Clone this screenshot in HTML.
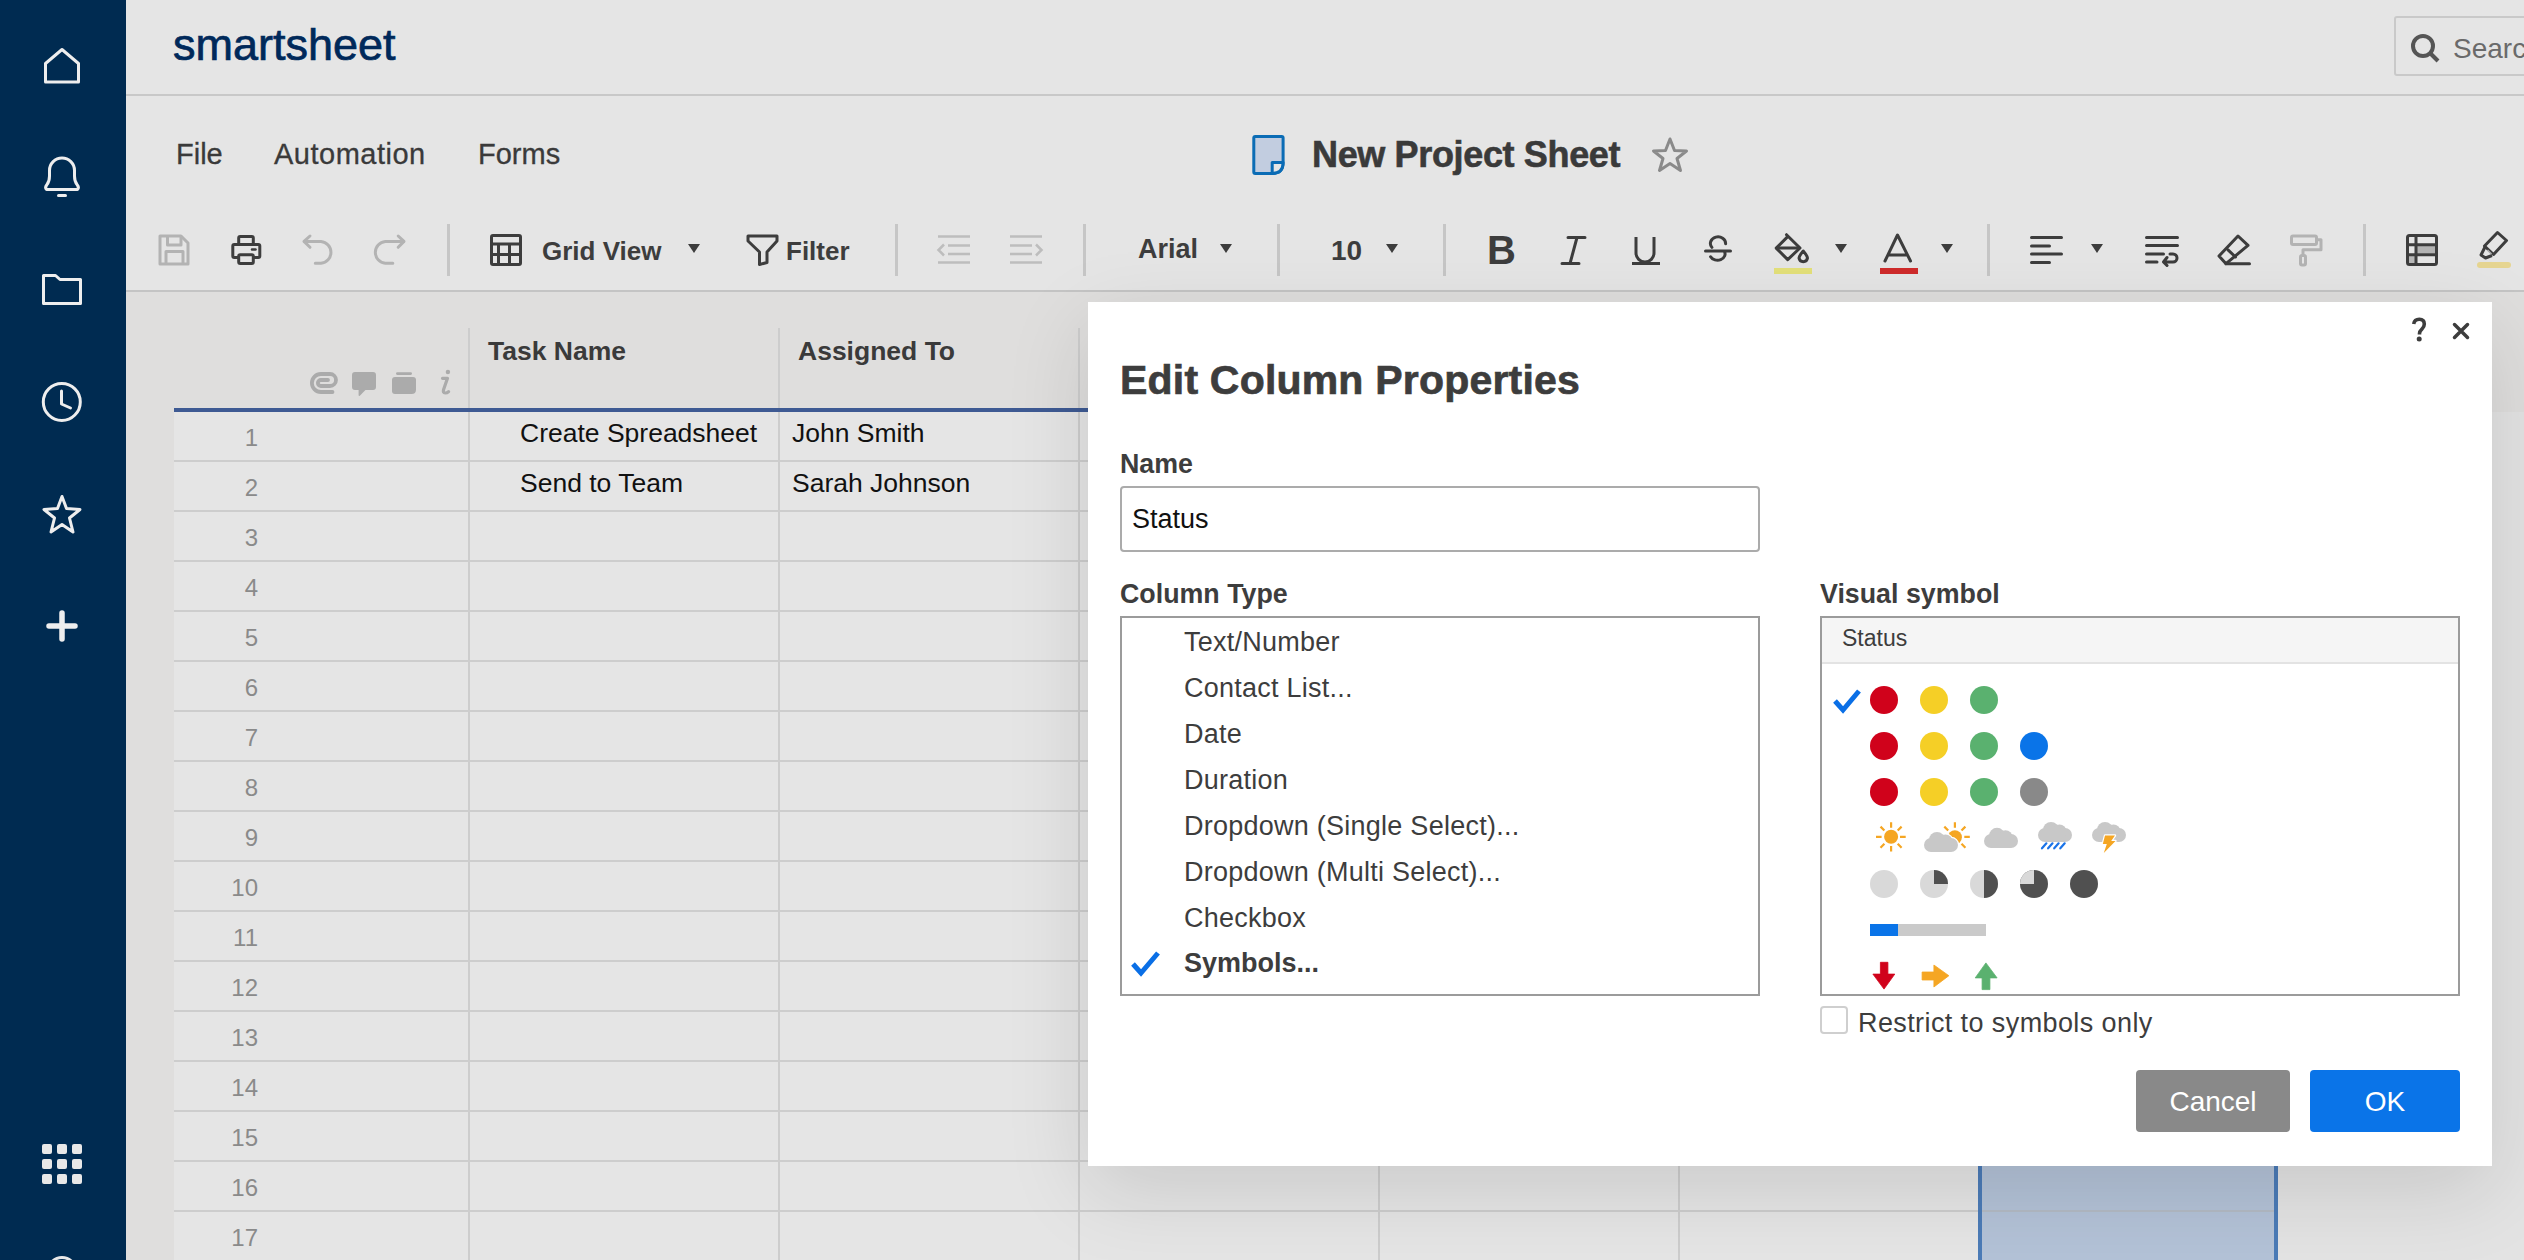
<!DOCTYPE html>
<html><head><meta charset="utf-8">
<style>
*{box-sizing:border-box;margin:0;padding:0}
html,body{width:2524px;height:1260px;overflow:hidden;background:#e5e5e5;font-family:"Liberation Sans",sans-serif;position:relative}
.a{position:absolute}
#side{left:0;top:0;width:126px;height:1260px;background:#002b51}
#hdr{left:126px;top:0;width:2398px;height:96px;background:#e5e5e5;border-bottom:2px solid #c8c8c8}
#menu{left:126px;top:96px;width:2398px;height:196px;background:#e5e5e5;border-bottom:2px solid #c4c4c4}
#gridbg{left:126px;top:292px;width:2398px;height:968px;background:#dfdedd}
.t{white-space:nowrap;line-height:1}
.vd{position:absolute;width:3px;height:52px;background:#c6c6c6;top:224px}
.rowline{position:absolute;left:174px;width:2104px;height:2px;background:#cdcdcd}
.coll{position:absolute;width:2px;background:#cdcdcd}
.rn{position:absolute;width:100px;text-align:right;font-size:24px;color:#8a8a8a;left:158px}
</style></head><body>
<div id="side" class="a"></div>
<div id="hdr" class="a"></div>
<div id="menu" class="a"></div>
<div id="gridbg" class="a"></div>
<!-- sidebar icons -->
<svg class="a" style="left:0;top:0" width="126" height="1260" fill="none" stroke="#eeeeee" stroke-width="3">
  <path d="M45.5 82 V63.5 L62 49.5 L78.5 63.5 V82 Z" stroke-linejoin="round"/>
  <path d="M46.5 189.5 Q44.5 187.5 47 184.5 Q49.5 181.5 49.5 176 V170.5 A12.5 12.5 0 0 1 74.5 170.5 V176 Q74.5 181.5 77 184.5 Q79.5 187.5 77.5 189.5 Z" stroke-linejoin="round"/>
  <path d="M58.5 195.5 H65.5" stroke-linecap="round"/>
  <path d="M43.5 303.5 V275.5 H55.5 L60 279.5 H80.5 V303.5 Z" stroke-linejoin="round"/>
  <circle cx="61.8" cy="401.9" r="18.5"/>
  <path d="M61.5 391 V404 L70.5 408" stroke-linecap="round" stroke-linejoin="round"/>
  <path d="M62 496.5 L66.5 508.5 L80 509.5 L69.5 518 L73 532 L62 524.5 L51 532 L54.5 518 L44 509.5 L57.5 508.5 Z" stroke-linejoin="round"/>
  <path d="M62 613 V639 M49 626 H75" stroke-width="5.5" stroke-linecap="round"/>
</svg>
<svg class="a" style="top:1142px;left:40px" width="44" height="44" fill="#e8e8e8">
  <rect x="2" y="2" width="10" height="10" rx="2"/><rect x="17" y="2" width="10" height="10" rx="2"/><rect x="32" y="2" width="10" height="10" rx="2"/>
  <rect x="2" y="17" width="10" height="10" rx="2"/><rect x="17" y="17" width="10" height="10" rx="2"/><rect x="32" y="17" width="10" height="10" rx="2"/>
  <rect x="2" y="32" width="10" height="10" rx="2"/><rect x="17" y="32" width="10" height="10" rx="2"/><rect x="32" y="32" width="10" height="10" rx="2"/>
</svg>
<svg class="a" style="left:0;top:1240px" width="126" height="20" fill="none" stroke="#e8e8e8" stroke-width="3"><circle cx="62" cy="31.5" r="14"/></svg>

<!-- header -->
<div class="a t" style="left:173px;top:21.6px;font-size:45px;color:#00295a;-webkit-text-stroke:0.7px #00295a">smartsheet</div>
<div class="a" style="left:2394px;top:16px;width:140px;height:60px;border:2px solid #c9c9c9;border-radius:3px;background:#e5e5e5"></div>
<svg class="a" style="left:2408px;top:30px" width="34" height="34" fill="none" stroke="#555" stroke-width="4"><circle cx="15" cy="16" r="10"/><path d="M22 23 L30 31" stroke-linecap="butt"/></svg>
<div class="a t" style="left:2453px;top:35px;font-size:28px;color:#6a6a6a">Searc</div>

<!-- menu -->
<div class="a t" style="left:176px;top:140px;font-size:29px;color:#3a3a3a;-webkit-text-stroke:0.3px #3a3a3a">File</div>
<div class="a t" style="left:274px;top:140px;font-size:29px;color:#3a3a3a;letter-spacing:0.5px;-webkit-text-stroke:0.3px #3a3a3a">Automation</div>
<div class="a t" style="left:478px;top:140px;font-size:29px;color:#3a3a3a;-webkit-text-stroke:0.3px #3a3a3a">Forms</div>
<svg class="a" style="left:1250px;top:132px" width="40" height="46" stroke="#0b6cb5" stroke-width="3" stroke-linejoin="round"><path d="M3.8 5.8 Q3.8 4.4 5.2 4.4 H31.7 Q33.1 4.4 33.1 5.8 V30.5 Q33.1 41.4 22.2 41.4 H5.2 Q3.8 41.4 3.8 40 Z" fill="#c2cde0"/><path d="M22.2 41.4 V30.5 H33.1 Q33.1 41.4 22.2 41.4 Z" fill="#e6e6e6"/></svg>
<div class="a t" style="left:1312px;top:137px;font-size:36px;font-weight:bold;color:#3a3a3a;letter-spacing:-0.35px;-webkit-text-stroke:0.6px #3a3a3a">New Project Sheet</div>
<svg class="a" style="left:1650px;top:136px" width="40" height="40" fill="none" stroke="#8a8a8a" stroke-width="3"><path d="M20 3 L24.5 14.5 L36.5 15 L27 22.5 L30.5 34.5 L20 27.5 L9.5 34.5 L13 22.5 L3.5 15 L15.5 14.5 Z" stroke-linejoin="round"/></svg>
<!-- toolbar -->
<svg class="a" style="left:126px;top:200px" width="2398" height="90" fill="none" stroke="#3d3d3d" stroke-width="3">
  <!-- save (disabled) -->
  <g stroke="#b3b3b3" stroke-linejoin="round"><path d="M34 36 H55 L62 43 V64 H34 Z"/><path d="M41.5 36 V45 H55 V36 M40 64 V51.5 H57 V64"/></g>
  <!-- print -->
  <g stroke-linejoin="round"><rect x="112.7" y="36.5" width="14.6" height="8" rx="1.5"/><rect x="106.8" y="44.5" width="27" height="13" rx="1.5"/><rect x="112.7" y="54.7" width="14.6" height="8.8" rx="1.5" fill="#e5e5e5"/><path d="M126 49.5 H129.5" stroke-width="2.5" stroke-linecap="round"/></g>
  <!-- undo -->
  <g stroke="#b3b3b3" stroke-linecap="round" stroke-linejoin="round"><path d="M184 36 L178 41.4 L184 47.3"/><path d="M178.5 41.4 H195 A11 11 0 0 1 195 63.3 H189.3"/></g>
  <!-- redo -->
  <g stroke="#b3b3b3" stroke-linecap="round" stroke-linejoin="round"><path d="M272.2 36 L278 41.4 L272.2 47.3"/><path d="M277.5 41.4 H259.3 A11 11 0 0 0 259.3 63.3 H266.8"/></g>
  <!-- grid icon -->
  <g stroke-linejoin="round"><rect x="365.5" y="35.5" width="29" height="29" rx="1.5"/><path d="M365 44 H395 M365 54.5 H395 M372.5 44 V65 M383.5 44 V65"/></g>
  <path d="M562 44 H574 L568 53 Z" fill="#3d3d3d" stroke="none"/>
  <!-- filter -->
  <path d="M622 36 H651 V41 L641 52 V62.5 L633.5 64.5 V52 L622 41 Z" stroke-linejoin="round"/>
  <!-- outdent -->
  <g stroke="#bdbdbd" stroke-width="2.5"><path d="M812 36.5 H844 M822 45.5 H844 M822 54 H844 M812 62.5 H844"/><path d="M818 44.5 L812.5 50 L818 55.5"/></g>
  <!-- indent -->
  <g stroke="#bdbdbd" stroke-width="2.5"><path d="M884 36.5 H916 M884 45.5 H906 M884 54 H906 M884 62.5 H916"/><path d="M910 44.5 L915.5 50 L910 55.5"/></g>
  <path d="M1094 44 H1106 L1100 53 Z" fill="#3d3d3d" stroke="none"/>
  <path d="M1260 44 H1272 L1266 53 Z" fill="#3d3d3d" stroke="none"/>
  <!-- I -->
  <path d="M1442 37.5 H1459 M1436 63.5 H1453 M1451 37.5 L1444 63.5" stroke-linecap="round"/>
  <!-- U -->
  <path d="M1510 37 V53 A9 9 0 0 0 1528 53 V37 M1506 63.5 H1534"/>
  <!-- S -->
  <path d="M1585.9 47.4 A7.6 6.6 0 1 1 1599.6 43.8 M1598.3 51.2 A7.6 6.3 0 1 1 1584.6 56.7 M1579.5 51 H1604.5" stroke-linecap="round"/>
  <!-- paint bucket -->
  <g stroke-linejoin="round" stroke-linecap="round"><path d="M1660.5 34.7 L1674 48 L1661.7 59.6 L1650.2 48.1 L1661.7 36.6"/><path d="M1651 48 H1673"/><path d="M1677.2 51 Q1681.5 56 1681.5 58 A4.3 4.3 0 0 1 1673 58 Q1673 56 1677.2 51 Z"/></g>
  <rect x="1648" y="68" width="38" height="6" fill="#e3e07a" stroke="none"/>
  <path d="M1709 44 H1721 L1715 53 Z" fill="#3d3d3d" stroke="none"/>
  <!-- A -->
  <path d="M1759 61 L1771.5 35 L1784.5 61 M1762 55 H1781" stroke-linejoin="round" stroke-linecap="round"/>
  <rect x="1754" y="68" width="38" height="6" fill="#cf2b2b" stroke="none"/>
  <path d="M1815 44 H1827 L1821 53 Z" fill="#3d3d3d" stroke="none"/>
  <!-- align left -->
  <g stroke-linecap="round"><path d="M1905.5 37.4 H1935.5 M1905.5 46 H1923.5 M1905.5 54 H1935.5 M1905.5 62.5 H1923.5"/></g>
  <path d="M1965 44 H1977 L1971 53 Z" fill="#3d3d3d" stroke="none"/>
  <!-- wrap -->
  <g stroke-linecap="round" stroke-linejoin="round"><path d="M2020.5 37.4 H2051.5 M2020.5 45.5 H2051.5 M2020.5 54 H2037.5 M2020.5 62 H2031"/><path d="M2044 54 H2047 A4 4 0 0 1 2047 62 H2038 M2041 57.5 L2037.5 62 L2041 65.5"/></g>
  <!-- eraser -->
  <g stroke-linejoin="round" stroke-linecap="round"><path d="M2112 36 L2122 45.4 L2100 63.7 L2093 56 Z"/><path d="M2102 49.8 L2109.5 57"/><path d="M2100 63.7 H2123.5"/></g>
  <!-- paint roller -->
  <g stroke="#b3b3b3" stroke-linejoin="round"><rect x="2165.5" y="36" width="25" height="8.5" rx="1.5"/><path d="M2190.5 39.7 H2195 V49.8 H2177 V55"/><rect x="2174.5" y="55.5" width="5" height="9.5" rx="1.5"/></g>
  <!-- table -->
  <g stroke-linejoin="round"><rect x="2290" y="45" width="20" height="8.5" fill="#b3b3b3" stroke="none"/><rect x="2281" y="55" width="8" height="9" fill="#b8b8b8" stroke="none"/><rect x="2281.5" y="35.5" width="29" height="29" rx="2"/><path d="M2281 44.7 H2311 M2281 54.8 H2311 M2290 35 V65"/></g>
  <!-- highlighter -->
  <g stroke-linejoin="round"><path d="M2371.5 32.5 L2380.5 40.5 L2367.5 54.5 L2358.5 46 Z"/><path d="M2359 47 L2355 55 L2359.5 58 L2366 55.5"/><path d="M2361.5 50 L2365.5 54" stroke="#b3b3b3" stroke-width="1.5"/></g>
  <rect x="2351" y="62" width="34" height="6" rx="3" fill="#e6d591" stroke="none"/>
</svg>
<div class="vd" style="left:447px"></div>
<div class="vd" style="left:895px"></div>
<div class="vd" style="left:1083px"></div>
<div class="vd" style="left:1277px"></div>
<div class="vd" style="left:1443px"></div>
<div class="vd" style="left:1987px"></div>
<div class="vd" style="left:2363px"></div>
<div class="a t" style="left:542px;top:238px;font-size:26px;font-weight:bold;color:#3d3d3d">Grid View</div>
<div class="a t" style="left:786px;top:238px;font-size:26px;font-weight:bold;color:#3d3d3d">Filter</div>
<div class="a t" style="left:1138px;top:236px;font-size:27px;font-weight:bold;color:#3d3d3d">Arial</div>
<div class="a t" style="left:1331px;top:237px;font-size:28px;font-weight:bold;color:#3d3d3d">10</div>
<div class="a t" style="left:1487px;top:230px;font-size:40px;font-weight:bold;color:#3d3d3d">B</div>

<!-- grid -->
<div class="a" style="left:174px;top:410px;width:2104px;height:850px;background:#e5e5e5"></div>
<div class="a" style="left:2278px;top:412px;width:246px;height:848px;background:#e3e3e3"></div>
<div class="rowline" style="top:460px"></div>
<div class="rn t" style="top:426px">1</div>
<div class="rowline" style="top:510px"></div>
<div class="rn t" style="top:476px">2</div>
<div class="rowline" style="top:560px"></div>
<div class="rn t" style="top:526px">3</div>
<div class="rowline" style="top:610px"></div>
<div class="rn t" style="top:576px">4</div>
<div class="rowline" style="top:660px"></div>
<div class="rn t" style="top:626px">5</div>
<div class="rowline" style="top:710px"></div>
<div class="rn t" style="top:676px">6</div>
<div class="rowline" style="top:760px"></div>
<div class="rn t" style="top:726px">7</div>
<div class="rowline" style="top:810px"></div>
<div class="rn t" style="top:776px">8</div>
<div class="rowline" style="top:860px"></div>
<div class="rn t" style="top:826px">9</div>
<div class="rowline" style="top:910px"></div>
<div class="rn t" style="top:876px">10</div>
<div class="rowline" style="top:960px"></div>
<div class="rn t" style="top:926px">11</div>
<div class="rowline" style="top:1010px"></div>
<div class="rn t" style="top:976px">12</div>
<div class="rowline" style="top:1060px"></div>
<div class="rn t" style="top:1026px">13</div>
<div class="rowline" style="top:1110px"></div>
<div class="rn t" style="top:1076px">14</div>
<div class="rowline" style="top:1160px"></div>
<div class="rn t" style="top:1126px">15</div>
<div class="rowline" style="top:1210px"></div>
<div class="rn t" style="top:1176px">16</div>
<div class="rowline" style="top:1260px"></div>
<div class="rn t" style="top:1226px">17</div>
<div class="coll" style="left:468px;top:328px;height:932px"></div>
<div class="coll" style="left:778px;top:328px;height:932px"></div>
<div class="coll" style="left:1078px;top:328px;height:932px"></div>
<div class="coll" style="left:1378px;top:328px;height:932px"></div>
<div class="coll" style="left:1678px;top:328px;height:932px"></div>
<div class="coll" style="left:1978px;top:328px;height:932px"></div>
<div class="coll" style="left:2276px;top:328px;height:932px"></div>
<div class="a" style="left:174px;top:408px;width:2104px;height:4px;background:#3e5a93"></div>
<svg class="a" style="left:300px;top:360px" width="160" height="40" fill="#ababab" stroke="none">
  <path d="M32.5 32 H20.9 A9 9 0 0 1 20.9 14 H30 A6 6 0 0 1 30 26 H20.9 A3 3 0 0 1 20.9 20 H28" fill="none" stroke="#ababab" stroke-width="3.8" stroke-linecap="round"/>
  <path d="M55 12 H73 Q76 12 76 15 V27 Q76 30 73 30 H65.5 L59.8 35.8 Q58.6 36.6 58.6 35 V30 H55 Q52 30 52 27 V15 Q52 12 55 12 Z"/>
  <path d="M95 17 H113 Q116 17 116 20 V29.5 Q116 34 111.5 34 H95 Q92 34 92 31 V20 Q92 17 95 17 Z"/><rect x="96" y="12.2" width="16" height="2.7" rx="1.35"/>
  <circle cx="147.9" cy="12" r="2.2"/>
  <path d="M142.5 18.3 H147.5 L143.6 29.5 Q142.6 33 145.2 33 Q147.2 33 148.6 31.6" fill="none" stroke="#ababab" stroke-width="3.2" stroke-linecap="round" stroke-linejoin="round"/>
</svg>
<div class="a t" style="left:488px;top:338px;font-size:26.5px;font-weight:bold;color:#3a3a3a">Task Name</div>
<div class="a t" style="left:798px;top:338px;font-size:26.5px;font-weight:bold;color:#3a3a3a">Assigned To</div>
<div class="a t" style="left:520px;top:420px;font-size:26.5px;color:#111">Create Spreadsheet</div>
<div class="a t" style="left:792px;top:420px;font-size:26.5px;color:#111">John Smith</div>
<div class="a t" style="left:520px;top:470px;font-size:26.5px;color:#111">Send to Team</div>
<div class="a t" style="left:792px;top:470px;font-size:26.5px;color:#111">Sarah Johnson</div>
<div class="a" style="left:1978px;top:412px;width:300px;height:848px;background:#b3c2d7;border-left:4px solid #4b7bb7;border-right:4px solid #4b7bb7"></div>
<div class="a" style="left:1982px;top:460px;width:292px;height:2px;background:#b3bac4"></div>
<div class="a" style="left:1982px;top:510px;width:292px;height:2px;background:#b3bac4"></div>
<div class="a" style="left:1982px;top:560px;width:292px;height:2px;background:#b3bac4"></div>
<div class="a" style="left:1982px;top:610px;width:292px;height:2px;background:#b3bac4"></div>
<div class="a" style="left:1982px;top:660px;width:292px;height:2px;background:#b3bac4"></div>
<div class="a" style="left:1982px;top:710px;width:292px;height:2px;background:#b3bac4"></div>
<div class="a" style="left:1982px;top:760px;width:292px;height:2px;background:#b3bac4"></div>
<div class="a" style="left:1982px;top:810px;width:292px;height:2px;background:#b3bac4"></div>
<div class="a" style="left:1982px;top:860px;width:292px;height:2px;background:#b3bac4"></div>
<div class="a" style="left:1982px;top:910px;width:292px;height:2px;background:#b3bac4"></div>
<div class="a" style="left:1982px;top:960px;width:292px;height:2px;background:#b3bac4"></div>
<div class="a" style="left:1982px;top:1010px;width:292px;height:2px;background:#b3bac4"></div>
<div class="a" style="left:1982px;top:1060px;width:292px;height:2px;background:#b3bac4"></div>
<div class="a" style="left:1982px;top:1110px;width:292px;height:2px;background:#b3bac4"></div>
<div class="a" style="left:1982px;top:1160px;width:292px;height:2px;background:#b3bac4"></div>
<div class="a" style="left:1982px;top:1210px;width:292px;height:2px;background:#b3bac4"></div>
<div class="a" style="left:1982px;top:1260px;width:292px;height:2px;background:#b3bac4"></div>
<!-- modal -->
<div class="a" style="left:1088px;top:302px;width:1404px;height:864px;background:#fff;box-shadow:0 24px 80px rgba(0,0,0,0.12)"></div>
<svg class="a" style="left:2400px;top:310px" width="36" height="36" fill="none" stroke="#3d3d3d" stroke-width="3.6"><path d="M13.7 14 Q14.5 9.3 19.3 9.3 Q24.3 9.3 24.3 14 Q24.3 16.8 22 19 Q19.5 21.3 19.5 23.5 V24.5"/><circle cx="19.2" cy="29" r="2.5" fill="#3d3d3d" stroke="none"/></svg>
<svg class="a" style="left:2448px;top:318px" width="26" height="26" stroke="#3d3d3d" stroke-width="3.5" stroke-linecap="round"><path d="M6.5 6.5 L19.5 19.5 M19.5 6.5 L6.5 19.5"/></svg>
<div class="a t" style="left:1120px;top:359.5px;font-size:41px;font-weight:bold;color:#3d3d3d;letter-spacing:0.2px;-webkit-text-stroke:0.7px #3d3d3d">Edit Column Properties</div>
<div class="a t" style="left:1120px;top:451px;font-size:26.8px;font-weight:bold;color:#3d3d3d">Name</div>
<div class="a" style="left:1120px;top:486px;width:640px;height:66px;border:2px solid #ababab;border-radius:4px"></div>
<div class="a t" style="left:1132px;top:506px;font-size:27px;color:#111">Status</div>
<div class="a t" style="left:1120px;top:581px;font-size:26.8px;font-weight:bold;color:#3d3d3d">Column Type</div>
<div class="a" style="left:1120px;top:616px;width:640px;height:380px;border:2px solid #9b9b9b"></div>
<div class="a t" style="left:1184px;top:629px;font-size:27px;color:#3d3d3d;letter-spacing:0.25px">Text/Number</div>
<div class="a t" style="left:1184px;top:675px;font-size:27px;color:#3d3d3d;letter-spacing:0.25px">Contact List...</div>
<div class="a t" style="left:1184px;top:721px;font-size:27px;color:#3d3d3d;letter-spacing:0.25px">Date</div>
<div class="a t" style="left:1184px;top:767px;font-size:27px;color:#3d3d3d;letter-spacing:0.25px">Duration</div>
<div class="a t" style="left:1184px;top:813px;font-size:27px;color:#3d3d3d;letter-spacing:0.25px">Dropdown (Single Select)...</div>
<div class="a t" style="left:1184px;top:859px;font-size:27px;color:#3d3d3d;letter-spacing:0.25px">Dropdown (Multi Select)...</div>
<div class="a t" style="left:1184px;top:905px;font-size:27px;color:#3d3d3d;letter-spacing:0.25px">Checkbox</div>
<div class="a t" style="left:1184px;top:950px;font-size:27px;font-weight:bold;color:#3d3d3d">Symbols...</div>
<svg class="a" style="left:1130px;top:948px" width="34" height="30"><path d="M3 16 L11 25 L28 5" fill="none" stroke="#0a6fe6" stroke-width="5" stroke-linejoin="miter"/></svg>

<div class="a t" style="left:1820px;top:581px;font-size:26.8px;font-weight:bold;color:#3d3d3d">Visual symbol</div>
<div class="a" style="left:1820px;top:616px;width:640px;height:380px;border:2px solid #9b9b9b"></div>
<div class="a" style="left:1822px;top:618px;width:636px;height:46px;background:#f5f5f5;border-bottom:2px solid #e3e3e3"></div>
<div class="a t" style="left:1842px;top:627px;font-size:23px;color:#3d3d3d">Status</div>
<svg class="a" style="left:1822px;top:664px" width="636" height="330">
  <path d="M13 37 L21 46 L37 27" fill="none" stroke="#0a6fe6" stroke-width="5"/>
  <g>
   <circle cx="62" cy="36" r="14" fill="#d0021b"/><circle cx="112" cy="36" r="14" fill="#f5cf26"/><circle cx="162" cy="36" r="14" fill="#5ab16f"/>
   <circle cx="62" cy="82" r="14" fill="#d0021b"/><circle cx="112" cy="82" r="14" fill="#f5cf26"/><circle cx="162" cy="82" r="14" fill="#5ab16f"/><circle cx="212" cy="82" r="14" fill="#0a74e8"/>
   <circle cx="62" cy="128" r="14" fill="#d0021b"/><circle cx="112" cy="128" r="14" fill="#f5cf26"/><circle cx="162" cy="128" r="14" fill="#5ab16f"/><circle cx="212" cy="128" r="14" fill="#898989"/>
  </g>
  <!-- weather -->
  <g>
   <g stroke="#f5a623" stroke-width="2.2"><path d="M69.1 158.2 V163.7 M69.1 182 V187.5 M54 172.8 H59.6 M78 172.8 H83.7 M58.5 162.6 L62.4 166.5 M79.6 162.6 L75.7 166.5 M58.5 183.7 L62.4 179.8 M79.6 183.7 L75.7 179.8"/></g>
   <circle cx="69.1" cy="172.8" r="7" fill="#f5a623"/>
   <g stroke="#f5a623" stroke-width="2.2"><path d="M132.9 158.2 V163.7 M142.3 172.8 H147.8 M122.3 162.6 L126.2 166.5 M143.4 162.6 L139.5 166.5 M143.4 183.7 L139.5 179.8"/></g>
   <circle cx="132.9" cy="173.2" r="7" fill="#f5a623"/>
   <g fill="#c8c8c8" stroke="#fff" stroke-width="2.5"><circle cx="109" cy="181" r="7"/><circle cx="129" cy="181" r="7"/><circle cx="115" cy="176" r="8"/><circle cx="123.5" cy="177.5" r="7"/></g>
   <g fill="#c8c8c8"><circle cx="109" cy="181" r="7"/><circle cx="129" cy="181" r="7"/><circle cx="115" cy="176" r="8"/><circle cx="123.5" cy="177.5" r="7"/><rect x="109" y="174" width="20" height="14"/></g>
   <g fill="#c8c8c8"><circle cx="169" cy="177" r="7"/><circle cx="189" cy="177" r="7"/><circle cx="175" cy="171.8" r="8"/><circle cx="183.5" cy="173.3" r="7"/><rect x="169" y="170" width="20" height="14"/></g>
   <g fill="#c8c8c8"><circle cx="223" cy="171" r="7"/><circle cx="243" cy="171" r="7"/><circle cx="229" cy="166" r="8"/><circle cx="237.5" cy="167.5" r="7"/><rect x="223" y="164" width="20" height="14"/></g>
   <g stroke="#1a73e8" stroke-width="2.2" stroke-linecap="round"><path d="M220 184.3 L224.4 179.3 M226.1 184.3 L230.5 179.3 M232.2 184.3 L236.6 179.3 M238.3 184.3 L242.7 179.3"/></g>
   <g fill="#c8c8c8"><circle cx="277" cy="171" r="7"/><circle cx="297" cy="171" r="7"/><circle cx="283" cy="166" r="8"/><circle cx="291.5" cy="167.5" r="7"/><rect x="277" y="164" width="20" height="14"/></g>
   <path d="M283 171.5 H293 L289.2 177 H293.5 L281.8 189 L284.8 180 H280.8 Z" fill="#fff" stroke="#fff" stroke-width="2.4" stroke-linejoin="round"/><path d="M283 171.5 H293 L289.2 177 H293.5 L281.8 189 L284.8 180 H280.8 Z" fill="#f5a623"/>
  </g>
  <!-- harvey balls -->
  <circle cx="62" cy="220" r="14" fill="#d9d9d9"/>
  <circle cx="112" cy="220" r="14" fill="#d9d9d9"/><path d="M112 220 V206 A14 14 0 0 1 126 220 Z" fill="#505050"/>
  <circle cx="162" cy="220" r="14" fill="#d9d9d9"/><path d="M162 206 A14 14 0 0 1 162 234 Z" fill="#505050"/>
  <circle cx="212" cy="220" r="14" fill="#505050"/><path d="M212 220 H198 A14 14 0 0 1 212 206 Z" fill="#d9d9d9"/>
  <circle cx="262" cy="220" r="14" fill="#505050"/>
  <!-- progress bar -->
  <rect x="48" y="260" width="116" height="12" fill="#cacaca"/><rect x="48" y="260" width="28" height="12" fill="#0a74e8"/>
  <!-- arrows -->
  <path d="M58.4 298.3 H65.9 V310.1 H72.8 L62 325.1 L50.9 310.1 H58.4 Z" fill="#d0021b" stroke="#d0021b" stroke-width="0.8" stroke-linejoin="round"/>
  <path d="M100.1 308 H111.9 V301 L126.9 311.7 L111.9 323 V316 H100.1 Z" fill="#f5a623" stroke="#f5a623" stroke-width="0.8" stroke-linejoin="round"/>
  <path d="M160.1 325.6 H167.9 V313.9 H175.1 L163.9 298.9 L153.2 313.9 H160.1 Z" fill="#5ab16f" stroke="#5ab16f" stroke-width="0.8" stroke-linejoin="round"/>
</svg>
<div class="a" style="left:1820px;top:1006px;width:28px;height:28px;border:2px solid #cfcfcf;border-radius:4px"></div>
<div class="a t" style="left:1858px;top:1010px;font-size:27px;color:#3d3d3d;letter-spacing:0.4px">Restrict to symbols only</div>
<div class="a" style="left:2136px;top:1070px;width:154px;height:62px;background:#898989;border-radius:4px"></div>
<div class="a t" style="left:2136px;top:1088px;width:154px;text-align:center;font-size:28px;color:#fff">Cancel</div>
<div class="a" style="left:2310px;top:1070px;width:150px;height:62px;background:#0a74e8;border-radius:4px"></div>
<div class="a t" style="left:2310px;top:1088px;width:150px;text-align:center;font-size:28px;color:#fff">OK</div>
</body></html>
